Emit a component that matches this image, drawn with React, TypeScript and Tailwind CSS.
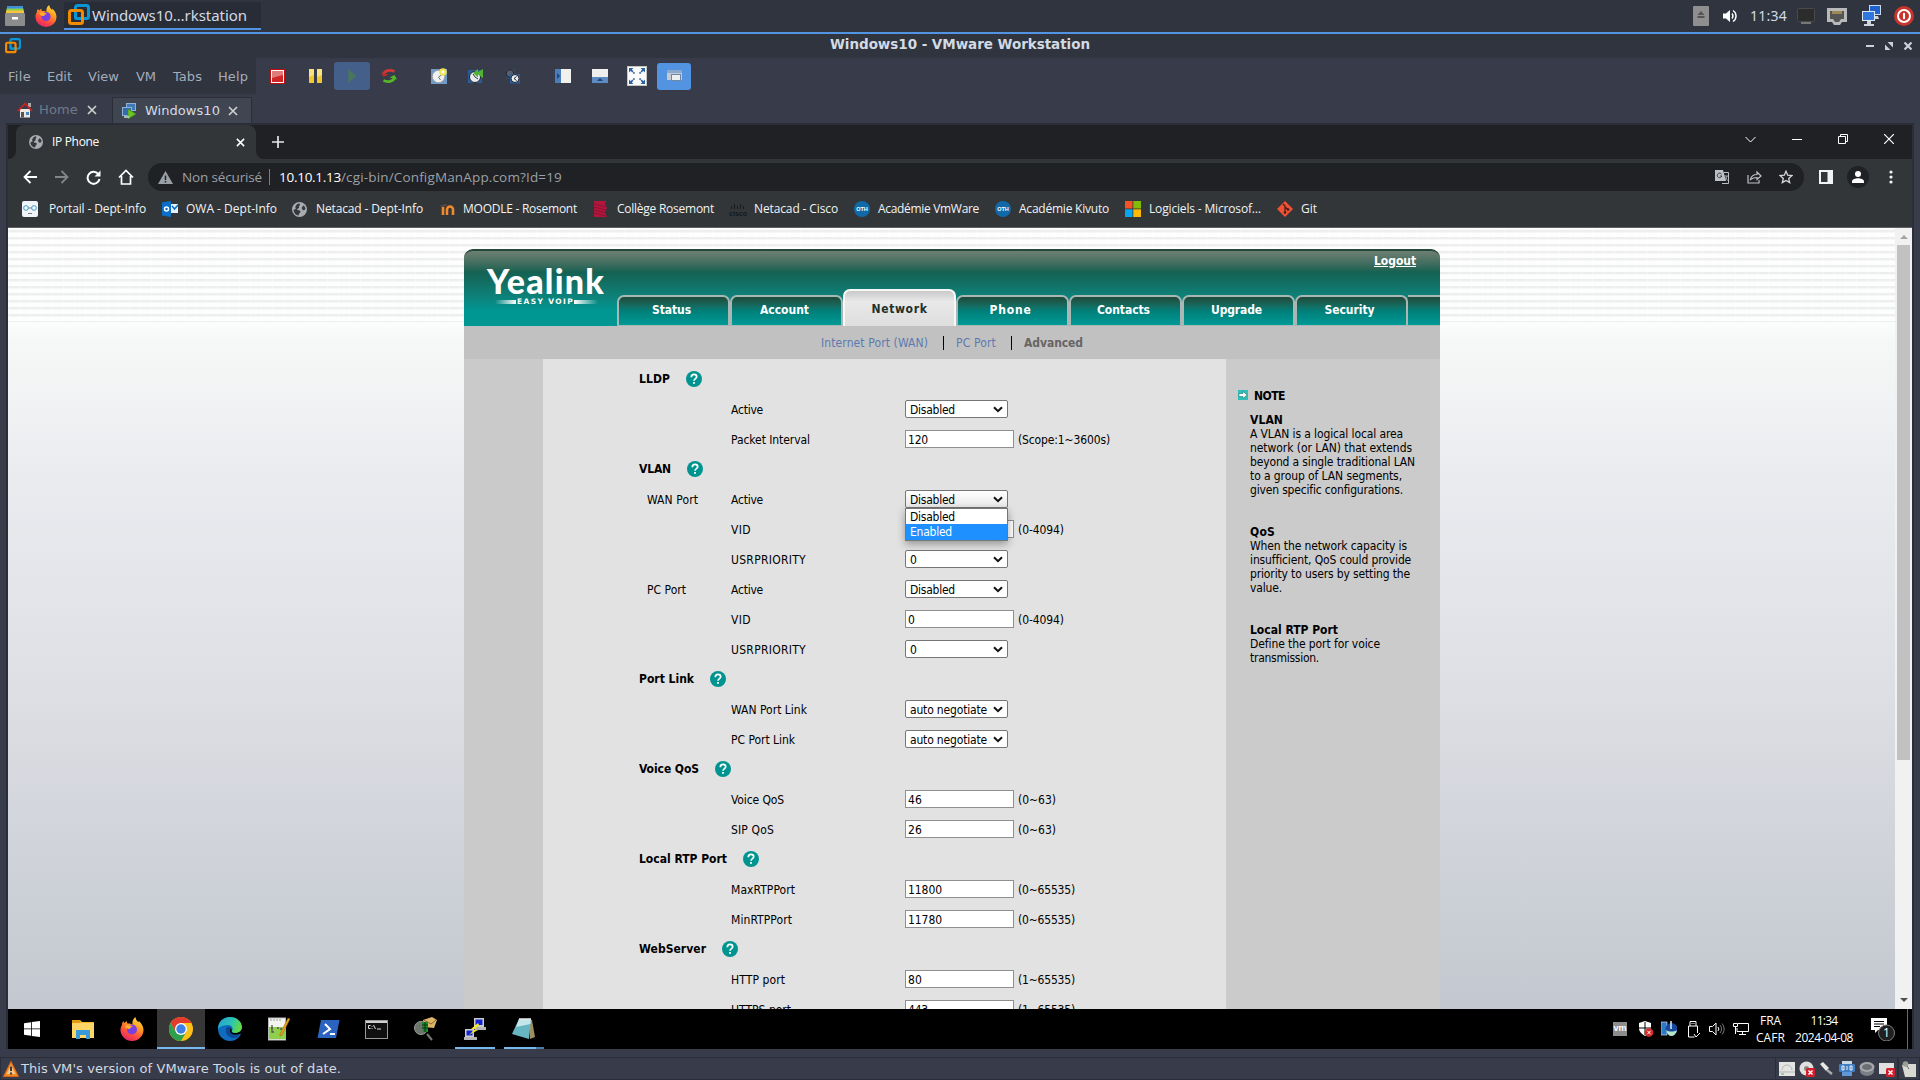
import React, { useLayoutEffect, useRef, useState } from "react";

/** Single-line label whose tracking is adjusted so that it fills a given width. */
function Fit({ w, className = "", children }: { w: number; className?: string; children: string }) {
  const ref = useRef<HTMLSpanElement>(null);
  const [ls, setLs] = useState(0);
  useLayoutEffect(() => {
    if (ref.current) {
      const natural = ref.current.getBoundingClientRect().width;
      setLs((w - natural) / children.length);
    }
  }, [w, children]);
  return (
    <span className={"block shrink-0 whitespace-nowrap " + className} style={{ width: w }}>
      <span ref={ref} style={{ letterSpacing: ls }}>
        {children}
      </span>
    </span>
  );
}

type IconProps = { className?: string };

const VmwareLogo = ({ className = "" }: IconProps) => (
  <svg viewBox="0 0 22 22" className={className} fill="none">
    <rect x="7.500" y="1.500" width="13" height="13" rx="2" stroke="#0a95d4" strokeWidth="3" />
    <rect x="1.500" y="6.500" width="13" height="13" rx="2" stroke="#f38b00" strokeWidth="3" />
    <path d="M7.500 10V13a1.500 1.500 0 0 0 1.500 1.500h4" stroke="#0a95d4" strokeWidth="3" />
  </svg>
);

const Firefox = ({ className = "" }: IconProps) => (
  <svg viewBox="0 0 24 24" className={className}>
    <defs>
      <linearGradient id="ffg" x1="0.8" y1="0" x2="0.3" y2="1">
        <stop offset="0" stopColor="#ffe847" />
        <stop offset="0.35" stopColor="#ffa21f" />
        <stop offset="0.7" stopColor="#ff4f3d" />
        <stop offset="1" stopColor="#e5236b" />
      </linearGradient>
    </defs>
    <path
      d="M2 8c0-2 .8-3.500 1.500-4 0 1 .5 1.800 1 2C5.500 5 6 4.500 7 4c-.2 1.200 0 2 .6 2.600C9 6.500 11 6.500 12.500 7.500 12 4.500 13 1.500 15.500 0c.2 2.500 1.500 4 3.200 5.500 0-.6 0-1.300-.2-1.800C21.500 6 23.500 9.500 23.500 13A11.500 11 0 0 1 .5 13C.5 11 1 9.500 2 8Z"
      fill="url(#ffg)"
    />
    <circle cx="12" cy="12.500" r="5" fill="#7a3fe0" />
    <path d="M5 9c3-2 6-.5 8 .8-2 .3-3 1.200-3 2.200-2 .2-4.500-.5-5-3Z" fill="#ffae2e" />
  </svg>
);

const Globe = ({ className = "" }: IconProps) => (
  <svg viewBox="0 0 16 16" className={className}>
    <circle cx="8" cy="8" r="8" fill="#a9adb2" />
    <path d="M8 1.500C9.500 3 7 4 7.500 5.500S5 7 5.500 8 9 8.500 9 10s-2 2-2 4.300C3.500 14 1.700 11 1.700 8.300L4 7.500 3.500 5 5.500 2.200ZM10.500 5.500c1-.5 1.500-1.500 1.500-2 1.500 1 2.300 2.500 2.400 4L12.500 9 10.500 7.500Z" fill="#35383c" />
  </svg>
);

const Close = ({ className = "" }: IconProps) => (
  <svg viewBox="0 0 10 10" className={className} fill="none" stroke="currentColor">
    <path d="M1 1l8 8M9 1L1 9" strokeWidth="1.700" />
  </svg>
);

const HelpIcon = () => (
  <svg viewBox="0 0 16 16" className="ml-4 h-4 w-4 shrink-0">
    <circle cx="8" cy="8" r="8" fill="#009490" />
    <path d="M5.300 6.200C5.300 4.400 6.500 3.400 8 3.400s2.700 1 2.700 2.400C10.700 7.500 8 7.700 8 9.800" fill="none" stroke="#fff" strokeWidth="1.700" />
    <rect x="7.100" y="11" width="1.800" height="1.800" fill="#fff" />
  </svg>
);

/* ---------- host desktop panel ---------- */

function TopPanel() {
  return (
    <div className="flex h-[34px] shrink-0 items-center border-b-2 border-[#5294e2] bg-[#2f343f]">
      <svg viewBox="0 0 20 20" className="ml-[5px] h-5 w-5">
        <rect x="2" y="0" width="16" height="4" fill="#3f8fd6" />
        <rect x="1.500" y="2.500" width="17" height="3" fill="#8bd04f" />
        <rect x="1" y="4.500" width="18" height="3" fill="#f5c63c" />
        <rect x="0" y="7" width="20" height="13" rx="1" fill="#8c8c8c" />
        <rect x="7" y="11" width="6" height="2.500" fill="#fff" />
      </svg>
      <Firefox className="ml-[10px] h-[22px] w-[22px]" />
      <div className="ml-[7px] flex h-7 w-[197px] items-center border-b-2 border-[#5294e2] bg-[#282c36]">
        <VmwareLogo className="ml-1 h-[22px] w-[22px]" />
        <Fit w={155} className="ml-[2px] font-['Noto_Sans'] text-[15px] text-[#d3dae3]">Windows10…rkstation</Fit>
      </div>
      <div className="ml-auto flex h-full items-center">
        <svg viewBox="0 0 16 20" className="h-5 w-4">
          <rect width="16" height="20" rx="1" fill="#8f8f8f" />
          <path d="M4.500 9L8 5l3.500 4ZM4.500 10h7v2h-7Z" fill="#555" />
        </svg>
        <svg viewBox="0 0 15 14" className="ml-[14px] h-[14px] w-[15px]" fill="none" stroke="#fff" strokeWidth="1.400">
          <path d="M0 4.500h3L7 1v12L3 9.500H0Z" fill="#fff" stroke="none" />
          <path d="M9 4.500a4 4 0 0 1 0 5M10 1.500a6.500 6.500 0 0 1 0 11" />
        </svg>
        <Fit w={37} className="mb-px ml-3 font-['Noto_Sans'] text-[14px] text-[#d3dae3]">11:34</Fit>
        <svg viewBox="0 0 18 16" className="ml-[10px] h-4 w-[18px]">
          <rect x="0.500" y="0.500" width="17" height="13" rx="1" fill="#2c2c2c" stroke="#4a4a4a" />
          <rect x="4" y="14" width="10" height="2" fill="#777" />
        </svg>
        <svg viewBox="0 0 20 17" className="ml-3 h-[17px] w-5">
          <path d="M0 0h20v14h-5l-2 3H7l-2-3H0Z" fill="#b9b9b9" />
          <path d="M3 3h14v8h-3l-2 3H8l-2-3H3Z" fill="#555" />
          <path d="M6 3v3M8 3v3M10 3v3M12 3v3M14 3v3" stroke="#eac054" />
        </svg>
        <svg viewBox="0 0 19 22" className="ml-[15px] h-[22px] w-[19px]">
          <rect x="7.500" y="0.500" width="11" height="9" fill="#1f62c9" stroke="#c9d8ee" />
          <path d="M10 11h6l1 3h-8Z" fill="#cfd4da" />
          <rect x="0.500" y="6.500" width="12" height="9" fill="#2f77dc" stroke="#dce6f5" />
          <path d="M5 16h4v3h3v2H2v-2h3Z" fill="#cfd4da" />
        </svg>
        <svg viewBox="0 0 20 20" className="mr-[6px] ml-[13px] h-5 w-5" fill="none">
          <circle cx="10" cy="10" r="10" fill="#c9342c" />
          <circle cx="10" cy="10" r="6" stroke="#fff" strokeWidth="2" />
          <path d="M10 7v6" stroke="#fff" strokeWidth="2" />
        </svg>
      </div>
    </div>
  );
}

function TitleBar() {
  return (
    <div className="grid h-6 shrink-0 grid-cols-[1fr_260px_1fr] items-center bg-[#2f343f] text-[#d3dae3]">
      <VmwareLogo className="ml-[5px] h-4 w-4" />
      <Fit w={260} className="pb-[3px] font-['DejaVu_Sans'] text-[13.500px] font-bold">Windows10 - VMware Workstation</Fit>
      <div className="flex items-center justify-end pr-2">
        <span className="h-[2px] w-2 bg-[#c9d1dc]" />
        <svg viewBox="0 0 8 8" className="ml-[11px] h-2 w-2" fill="#c9d1dc">
          <path d="M2.500 0H8v5.500ZM0 2.500V8h5.500Z" />
        </svg>
        <svg viewBox="0 0 8 8" className="ml-[11px] h-2 w-2" stroke="#c9d1dc" strokeWidth="2.200">
          <path d="M0.500 0.500l7 7M7.500 0.500l-7 7" />
        </svg>
      </div>
    </div>
  );
}

const menus: [string, number, string][] = [
  ["File", 23, "ml-2"],
  ["Edit", 25, "ml-4"],
  ["View", 31, "ml-4"],
  ["VM", 20, "ml-[17px]"],
  ["Tabs", 29, "ml-[17px]"],
  ["Help", 30, "ml-4"],
];

function MenuBar() {
  return (
    <div className="flex h-9 shrink-0 items-start bg-[#383c4a]">
      <div className="flex h-9 w-64 items-center bg-[#2f343f] pt-[2px] font-['DejaVu_Sans'] text-[13px] text-[#a3acbb]">
        {menus.map(([label, w, ml]) => (
          <Fit key={label} w={w} className={ml}>{label}</Fit>
        ))}
      </div>
      <div className="flex h-9 items-center">
        <svg viewBox="0 0 15 15" className="ml-[14px] h-[15px] w-[15px]">
          <rect width="15" height="15" fill="#c00d0d" />
          <rect x="1.500" y="1.500" width="12" height="12" fill="#cf2525" stroke="#fff" />
          <path d="M2 2h11v4L2 9Z" fill="#df7b7b" />
        </svg>
        <svg viewBox="0 0 13 14" className="ml-6 h-[14px] w-[13px]">
          <path d="M0 0h5v14H0ZM8 0h5v14H8Z" fill="#f0c931" />
          <path d="M0 0h5v6L0 8ZM8 0h5v6L8 8Z" fill="#f8e382" />
        </svg>
        <div className="ml-3 flex h-7 w-9 items-center justify-center rounded-[3px] bg-[#435f8a]">
          <svg viewBox="0 0 9 14" className="h-[14px] w-[9px]">
            <path d="M0.500 0.500L8 7L0.500 13.500Z" fill="#45795a" stroke="#4f6d68" />
          </svg>
        </div>
        <svg viewBox="0 0 16 14" className="ml-[11px] h-[14px] w-4" fill="none" strokeWidth="2.800">
          <path d="M2.500 5C4 1.500 9 .5 13.500 2.500" stroke="#cf3636" />
          <path d="M0 3.500l2.500 4.500 5-2.500Z" fill="#b92a2a" />
          <path d="M13.500 9C12 12.500 7 13.500 2.500 11.500" stroke="#56b528" />
          <path d="M16 10.500L13.500 6l-5 2.500Z" fill="#56b528" />
        </svg>
        <svg viewBox="0 0 16 16" className="ml-[34px] h-4 w-4">
          <rect y="1" width="16" height="15" fill="#6f9bc9" />
          <circle cx="7.500" cy="8.500" r="6.300" fill="#eef0f2" stroke="#999" />
          <path d="M7.500 9l3-2M7.500 9l2 3" stroke="#777" />
          <circle cx="12" cy="4" r="3.800" fill="#f2e253" />
          <circle cx="12" cy="4" r="1.500" fill="#fff" />
        </svg>
        <svg viewBox="0 0 16 16" className="ml-[21px] h-4 w-4">
          <rect y="2" width="14" height="13" fill="#2b5c96" />
          <circle cx="7" cy="9" r="5.500" fill="#e9ecef" stroke="#222" />
          <path d="M7 9l-2-3M7 9l3 2" stroke="#333" />
          <path d="M5 5l5-4v3l5-3v9l-5-3.500v3Z" fill="#4fb434" />
        </svg>
        <svg viewBox="0 0 16 16" className="ml-[21px] h-4 w-4">
          <rect x="1" y="1" width="9" height="10" fill="#39465c" />
          <circle cx="5" cy="5.500" r="3.800" fill="#58606e" stroke="#1f242e" />
          <rect x="5" y="6" width="10" height="9.500" fill="#2f5e98" />
          <circle cx="10" cy="10.500" r="4" fill="#e9ecef" stroke="#1b2433" />
          <path d="M11.500 8.500L9 10.500l2.500 2" stroke="#222" fill="none" />
        </svg>
        <svg viewBox="0 0 16 14" className="ml-[34px] h-[14px] w-4">
          <rect width="16" height="14" fill="#f0f0ee" />
          <rect width="6" height="14" fill="#4a7db9" />
          <path d="M2 4l3 3-3 3Z" fill="#1d4579" />
        </svg>
        <svg viewBox="0 0 16 14" className="ml-[21px] h-[14px] w-4">
          <rect width="16" height="14" fill="#f0f0ee" />
          <rect y="8" width="16" height="6" fill="#5e8cc2" />
          <path d="M5 12l3-3 3 3Z" fill="#1d4579" />
        </svg>
        <svg viewBox="0 0 20 20" className="ml-[19px] h-5 w-5">
          <rect x="0.500" y="0.500" width="19" height="19" fill="#fafafa" stroke="#c5c5c0" />
          <path d="M2 2h4.500L2 6.500ZM18 2v4.500L13.500 2ZM2 18v-4.500L6.500 18ZM18 18h-4.500l4.500-4.500Z" fill="#2c5fa0" />
          <path d="M3 3l4.500 4.500M17 3l-4.500 4.500M3 17l4.500-4.500M17 17l-4.500-4.500" stroke="#2c5fa0" strokeWidth="1.700" strokeDasharray="4 .7 2" />
        </svg>
        <div className="ml-[10px] flex h-[27px] w-[34px] items-center justify-center rounded-[3px] bg-[#5294e2]">
          <svg viewBox="0 0 15 12" className="h-3 w-[15px]">
            <rect width="15" height="10" fill="#c3ccd6" />
            <rect y="0" width="15" height="3" fill="#8aa9cc" />
            <rect x="4.500" y="4.500" width="9" height="6" fill="#eceef0" stroke="#6d87a5" />
          </svg>
        </div>
      </div>
    </div>
  );
}

function VmTabs() {
  return (
    <div className="flex h-[29px] shrink-0 items-end bg-[#383c4a] font-['DejaVu_Sans'] text-[13px]">
      <div className="flex h-[26px] w-28 items-center text-[#70788a]">
        <svg viewBox="0 0 16 16" className="ml-[17px] h-4 w-4">
          <path d="M3 7h10v8.500H3Z" fill="#ece9e4" />
          <path d="M11 1h3v4h-3Z" fill="#aaa" />
          <path d="M1 9l7-7.500L15 9" fill="none" stroke="#cf2222" strokeWidth="1.800" />
          <path d="M4 10h3v5.500H4Z" fill="#555" />
          <path d="M9 10h3v3H9Z" fill="#4d83bd" />
        </svg>
        <Fit w={39} className="ml-[6px]">Home</Fit>
        <Close className="ml-[9px] h-[10px] w-[10px] text-[#cdd0cc]" />
      </div>
      <div className="flex h-[26px] w-[140px] items-center border border-b-0 border-[#2b2e39] bg-[#404552] text-[#d3dae3]">
        <svg viewBox="0 0 15 16" className="ml-[9px] h-4 w-[15px]">
          <rect x="4.500" y="0.500" width="9" height="7" fill="#4179b8" stroke="#8db2da" />
          <rect x="0.500" y="4.500" width="9" height="8" fill="#346cab" stroke="#8db2da" />
          <path d="M6 6l8 5-8 5Z" fill="#6cc427" stroke="#3f8b16" strokeWidth="0.700" />
          <path d="M2 14h5" stroke="#cdd" strokeWidth="1.500" />
        </svg>
        <Fit w={75} className="ml-2">Windows10</Fit>
        <Close className="ml-2 h-[10px] w-[10px] text-[#cdd0cc]" />
      </div>
    </div>
  );
}

/* ---------- guest browser ---------- */

function ChromeTabStrip() {
  return (
    <div className="flex h-[34px] shrink-0 items-stretch bg-[#202124] text-white">
      <div className="flex w-2 items-end bg-[#323639]"><span className="h-full w-full rounded-br-lg bg-[#202124]" /></div>
      <div className="flex w-[240px] items-center rounded-t-lg bg-[#323639]">
        <Globe className="ml-[13px] h-[14px] w-[14px]" />
        <Fit w={47} className="ml-[9px] font-['Open_Sans'] text-[12px]">IP Phone</Fit>
        <Close className="mr-[11px] ml-auto h-[9px] w-[9px]" />
      </div>
      <div className="flex w-2 items-end bg-[#323639]"><span className="h-full w-full rounded-bl-lg bg-[#202124]" /></div>
      <svg viewBox="0 0 12 12" className="ml-2 h-3 w-3 self-center" stroke="#e4e6e8" strokeWidth="1.700">
        <path d="M6 0v12M0 6h12" />
      </svg>
      <div className="mr-[18px] ml-auto flex items-start pt-[9px]">
        <svg viewBox="0 0 11 11" className="mr-9 h-[11px] w-[11px]" fill="none" stroke="#fff">
          <path d="M0.500 3l5 5 5-5" />
        </svg>
        <svg viewBox="0 0 10 10" className="mr-9 h-[10px] w-[10px]" stroke="#fff">
          <path d="M0 5.500h10" />
        </svg>
        <svg viewBox="0 0 10 10" className="mr-9 h-[10px] w-[10px]" fill="none" stroke="#fff">
          <path d="M0.500 2.500h7v7h-7ZM2.500 2.500v-2h7v7h-2" />
        </svg>
        <svg viewBox="0 0 10 10" className="h-[10px] w-[10px]" fill="none" stroke="#fff" strokeWidth="1.200">
          <path d="M0 0l10 10M10 0L0 10" />
        </svg>
      </div>
    </div>
  );
}

function AddressBar() {
  return (
    <div className="flex h-9 shrink-0 items-center bg-[#323639]">
      <svg viewBox="0 0 14 14" className="ml-[15px] h-[14px] w-[14px]" fill="none" stroke="#fff" strokeWidth="1.800">
        <path d="M14 7H1.500M7.500 1L1.500 7l6 6" />
      </svg>
      <svg viewBox="0 0 14 14" className="ml-[18px] h-[14px] w-[14px]" fill="none" stroke="#82868a" strokeWidth="1.800">
        <path d="M0 7h12.500M6.500 1l6 6-6 6" />
      </svg>
      <svg viewBox="0 0 15 15" className="ml-[17px] h-[15px] w-[15px]" fill="none" stroke="#fff" strokeWidth="2">
        <path d="M12.600 4.500A6 6 0 1 0 13.500 9" />
        <path d="M14.500 0.500v6h-6Z" fill="#fff" stroke="none" />
      </svg>
      <svg viewBox="0 0 16 16" className="ml-[17px] h-4 w-4" fill="none" stroke="#fff" strokeWidth="1.700">
        <path d="M1 8.500L8 1.500l7 7M3.500 7v8h9V7" />
      </svg>
      <div className="ml-[14px] flex h-7 w-[1656px] items-center rounded-full bg-[#202124] font-['Open_Sans'] text-[13.500px] text-[#9aa0a6]">
        <svg viewBox="0 0 15 13" className="ml-[10px] h-[13px] w-[15px]">
          <path d="M7.500 0L15 13H0Z" fill="#9aa0a6" />
          <path d="M7.500 4.500v4.500M7.500 10v1.500" stroke="#202124" strokeWidth="1.500" />
        </svg>
        <Fit w={80} className="ml-[9px]">Non sécurisé</Fit>
        <span className="ml-[7px] h-4 w-px bg-[#7a7e82]" />
        <Fit w={62} className="ml-[9px] text-white">10.10.1.13</Fit>
        <Fit w={221}>/cgi-bin/ConfigManApp.com?Id=19</Fit>
        <div className="mr-[11px] ml-auto flex items-center">
          <svg viewBox="0 0 14 14" className="mr-[18px] h-[14px] w-[14px]">
            <path d="M0 0h8l3 11H0Z" fill="#bdc1c6" />
            <path d="M8.500 2.500h5v11H7" fill="none" stroke="#bdc1c6" />
            <path d="M6.500 4.200A2.300 2.300 0 1 0 6.800 6H4.800" fill="none" stroke="#3a3c40" />
            <path d="M9 6h4M12 6c-.5 2-1.500 3-2 4M10.500 7.500l2 3" fill="none" stroke="#bdc1c6" strokeWidth="0.800" />
          </svg>
          <svg viewBox="0 0 15 14" className="mr-[17px] h-[14px] w-[15px]" fill="none" stroke="#bdc1c6" strokeWidth="1.200">
            <path d="M1 5v8h11v-3M3.500 9.500c.5-3 3-5 6.500-5V2l4 4-4 3.500V7.500c-2.500 0-4.500.5-6.500 2Z" />
          </svg>
          <svg viewBox="0 0 14 14" className="h-[14px] w-[14px]" fill="none" stroke="#d5d7da" strokeWidth="1.300">
            <path d="M7 1.300l1.700 3.900 4.200.4-3.200 2.800 1 4.200L7 10.400l-3.700 2.200 1-4.200L1.100 5.600l4.200-.4Z" />
          </svg>
        </div>
      </div>
      <svg viewBox="0 0 14 14" className="ml-[15px] h-[14px] w-[14px]">
        <rect width="14" height="14" fill="#f1f3f4" />
        <rect x="2" y="2" width="6.500" height="10" fill="#323639" />
      </svg>
      <svg viewBox="0 0 22 22" className="ml-[14px] h-[22px] w-[22px]">
        <circle cx="11" cy="11" r="11" fill="#202124" />
        <circle cx="11" cy="8" r="3" fill="#fff" />
        <path d="M5 17v-1.500c0-2 3.500-3.200 6-3.200s6 1.200 6 3.200V17Z" fill="#fff" />
      </svg>
      <svg viewBox="0 0 4 14" className="ml-5 h-[14px] w-1" fill="#f1f3f4">
        <circle cx="2" cy="2" r="1.600" />
        <circle cx="2" cy="7" r="1.600" />
        <circle cx="2" cy="12" r="1.600" />
      </svg>
    </div>
  );
}

const Oth = () => (
  <div className="flex h-4 w-4 items-center justify-center rounded-full bg-[#1169a8] font-['Liberation_Sans'] text-[5.500px] font-bold text-white">OTH</div>
);

const bookmarks: { label: string; w: number; slot: string; icon: React.ReactNode }[] = [
  {
    label: "Portail - Dept-Info", w: 97, slot: "w-[140px] gap-[11px]",
    icon: (
      <svg viewBox="0 0 16 16" className="h-4 w-4">
        <rect width="16" height="16" rx="2" fill="#eef4f8" />
        <circle cx="4" cy="7" r="2.300" fill="#fff" stroke="#3c94c2" />
        <circle cx="12" cy="7" r="2.300" fill="#fff" stroke="#3c94c2" />
        <path d="M6.500 7h3M6 12.500h4" stroke="#557" strokeWidth="0.800" />
      </svg>
    ),
  },
  {
    label: "OWA - Dept-Info", w: 91, slot: "w-[130px] gap-2",
    icon: (
      <svg viewBox="0 0 16 16" className="h-4 w-4">
        <path d="M0 1.500L9 0v16l-9-1.500Z" fill="#0a6fc9" />
        <rect x="9" y="3" width="7" height="9" fill="#e8f1fb" />
        <path d="M10 5l2.500 3L16 4" stroke="#0a6fc9" strokeWidth="1.500" fill="none" />
        <circle cx="4.500" cy="8" r="2" fill="none" stroke="#fff" strokeWidth="1.500" />
      </svg>
    ),
  },
  { label: "Netacad - Dept-Info", w: 107, slot: "w-[147px] gap-2", icon: <Globe className="h-[15px] w-[15px]" /> },
  {
    label: "MOODLE - Rosemont", w: 114, slot: "w-[154px] gap-2",
    icon: (
      <svg viewBox="0 0 16 16" className="h-4 w-4" fill="none">
        <path d="M4 6v8M8 14V8.500a3 3 0 0 1 6 0V14" stroke="#f08a2c" strokeWidth="2.600" />
        <path d="M0 5l6-2 3 1-5 2Z" fill="#5a4a42" />
      </svg>
    ),
  },
  {
    label: "Collège Rosemont", w: 97, slot: "w-[137px] gap-2",
    icon: (
      <svg viewBox="0 0 16 16" className="h-4 w-4">
        <path d="M1 0h12l-1 3 2 4-2 4 2 5H1Z" fill="#b3163c" />
        <path d="M1 3l12 3M1 6l12 3M1 9l12 3M1 12l12 3" stroke="#7e1331" strokeWidth="0.800" />
      </svg>
    ),
  },
  {
    label: "Netacad - Cisco", w: 84, slot: "w-[124px] gap-2",
    icon: (
      <div className="flex h-4 w-4 flex-col items-center justify-center">
        <svg viewBox="0 0 16 8" className="h-2 w-4" stroke="#17191b">
          <path d="M1.500 4v3M4.500 2v5M7.500 4v3M10.500 2v5M13.500 4v3" />
        </svg>
        <span className="font-['Liberation_Sans'] text-[7px] leading-[7px] font-bold text-[#17191b]">cisco</span>
      </div>
    ),
  },
  { label: "Académie VmWare", w: 101, slot: "w-[141px] gap-2", icon: <Oth /> },
  { label: "Académie Kivuto", w: 90, slot: "w-[130px] gap-2", icon: <Oth /> },
  {
    label: "Logiciels - Microsof…", w: 112, slot: "w-[152px] gap-2",
    icon: (
      <svg viewBox="0 0 16 16" className="h-4 w-4">
        <path d="M0 0h7.500v7.500H0Z" fill="#f35325" />
        <path d="M8.300 0H16v7.500H8.300Z" fill="#81bc06" />
        <path d="M0 8.300h7.500V16H0Z" fill="#05a6f0" />
        <path d="M8.300 8.300H16V16H8.300Z" fill="#ffba08" />
      </svg>
    ),
  },
  {
    label: "Git", w: 16, slot: "w-[60px] gap-2",
    icon: (
      <svg viewBox="0 0 16 16" className="h-4 w-4">
        <path d="M8 0l8 8-8 8-8-8Z" fill="#f05033" />
        <path d="M6 3l2 2v7M8 6l3 2.500" stroke="#3a1f1b" strokeWidth="1.200" fill="none" />
        <circle cx="8" cy="11.500" r="1.300" fill="#3a1f1b" />
        <circle cx="11" cy="8.500" r="1.300" fill="#3a1f1b" />
      </svg>
    ),
  },
];

function BookmarksBar() {
  return (
    <div className="flex h-[33px] shrink-0 items-center border-b border-[#5f6164] bg-[#323639] pb-1 pl-[14px] font-['Open_Sans'] text-[12px] text-[#f1f3f4]">
      {bookmarks.map((b) => (
        <div key={b.label} className={"flex shrink-0 items-center " + b.slot}>
          <div className="flex w-4 shrink-0 items-center">{b.icon}</div>
          <Fit w={b.w}>{b.label}</Fit>
        </div>
      ))}
    </div>
  );
}

/* ---------- Yealink page ---------- */

const tabs: [string, number][] = [
  ["Status", 39],
  ["Account", 49],
  ["Network", 56],
  ["Phone", 42],
  ["Contacts", 53],
  ["Upgrade", 51],
  ["Security", 50],
];

function Header() {
  return (
    <div className="flex h-[77px] items-stretch rounded-t-[9px] border-t-2 border-[#26483a] bg-linear-to-b from-[#6e7f73] via-[#146152] via-28% to-[#009692] to-80% text-white">
      <div className="flex w-[153px] shrink-0 flex-col pl-[23px]">
        <Fit w={118} className="mt-[13px] font-['Lato'] text-[34px] leading-[34px] font-black">Yealink</Fit>
        <div className="ml-2 flex h-2 items-center">
          <span className="h-1 w-[21px] bg-linear-to-r from-transparent to-white" />
          <Fit w={57} className="ml-px font-['DejaVu_Sans'] text-[7.500px] leading-[8px] font-bold">EASY VOIP</Fit>
          <span className="h-1 w-6 bg-linear-to-l from-transparent to-white" />
        </div>
      </div>
      <div className="flex min-w-0 flex-1 flex-col">
        <Fit w={42} className="mt-[2px] mr-6 self-end font-['DejaVu_Sans_Condensed'] text-[12px] leading-4 font-bold underline">Logout</Fit>
        <div className="mt-auto flex items-end font-['DejaVu_Sans_Condensed'] text-[12px] font-bold">
          {tabs.map(([label, w]) =>
            label === "Network" ? (
              <div key={label} className="flex h-[37px] w-[113px] items-center justify-center rounded-t-[7px] border-2 border-b-0 border-[#f8f8f8] bg-linear-to-b from-[#c9c9c9] via-[#e9e9e9] via-30% to-[#dedede] text-[#22302a]">
                <Fit w={w}>{label}</Fit>
              </div>
            ) : (
              <div key={label} className="flex h-[31px] w-[113px] items-center justify-center rounded-t-[7px] border-2 border-b border-[#a9b8b5] bg-linear-to-b from-[#1d4a39] via-[#007f79] via-50% to-[#009a96] pr-1 pb-[3px]">
                <Fit w={w}>{label}</Fit>
              </div>
            ),
          )}
          <div className="h-[31px] flex-1 border-t-2 border-b border-[#a9b8b5] bg-linear-to-b from-[#1d4a39] via-[#007f79] via-50% to-[#009a96]" />
        </div>
      </div>
    </div>
  );
}

function SubNav() {
  return (
    <div className="flex h-[33px] items-center bg-[#c1c1c1] pl-[357px] font-['DejaVu_Sans_Condensed'] text-[12px] text-[#5d7ab0]">
      <Fit w={107}>Internet Port (WAN)</Fit>
      <span className="ml-[15px] h-[14px] w-px bg-black" />
      <Fit w={40} className="ml-3">PC Port</Fit>
      <span className="ml-[15px] h-[14px] w-px bg-black" />
      <Fit w={59} className="ml-3 font-bold text-[#666]">Advanced</Fit>
    </div>
  );
}

function SelectBox({ value, w, open = false }: { value: string; w: number; open?: boolean }) {
  return (
    <div className={"relative flex h-[18px] w-[103px] items-center justify-between rounded-[2px] border border-[#767676] pl-1 " + (open ? "bg-linear-to-b from-white to-[#e9e9e9]" : "bg-white")}>
      <Fit w={w} className="pt-px">{value}</Fit>
      <svg viewBox="0 0 10 7" className="mr-1 h-[7px] w-[10px]" fill="none" stroke="#111" strokeWidth="2">
        <path d="M1 1.200l4 4 4-4" />
      </svg>
      {open && (
        <div className="absolute top-[17px] -left-px z-10 w-[103px] border border-[#767676] bg-white shadow-[0_3px_8px_rgba(0,0,0,0.35)]">
          <div className="h-[15px] pl-1 leading-4"><Fit w={45}>Disabled</Fit></div>
          <div className="h-4 bg-[#1e90ff] pl-1 leading-4 text-white"><Fit w={42}>Enabled</Fit></div>
        </div>
      )}
    </div>
  );
}

type Row =
  | { kind: "section"; label: string; w: number }
  | { kind: "select"; group?: string; groupW?: number; label: string; w: number; value: string; vw: number; open?: boolean }
  | { kind: "input"; label: string; w: number; value: string; vw: number; hint: string; hw: number };

const rows: Row[] = [
  { kind: "section", label: "LLDP", w: 31 },
  { kind: "select", label: "Active", w: 32, value: "Disabled", vw: 45 },
  { kind: "input", label: "Packet Interval", w: 79, value: "120", vw: 20, hint: "(Scope:1~3600s)", hw: 92 },
  { kind: "section", label: "VLAN", w: 32 },
  { kind: "select", group: "WAN Port", groupW: 51, label: "Active", w: 32, value: "Disabled", vw: 45, open: true },
  { kind: "input", label: "VID", w: 20, value: "", vw: 0, hint: "(0-4094)", hw: 46 },
  { kind: "select", label: "USRPRIORITY", w: 75, value: "0", vw: 7 },
  { kind: "select", group: "PC Port", groupW: 39, label: "Active", w: 32, value: "Disabled", vw: 45 },
  { kind: "input", label: "VID", w: 20, value: "0", vw: 7, hint: "(0-4094)", hw: 46 },
  { kind: "select", label: "USRPRIORITY", w: 75, value: "0", vw: 7 },
  { kind: "section", label: "Port Link", w: 55 },
  { kind: "select", label: "WAN Port Link", w: 76, value: "auto negotiate", vw: 77 },
  { kind: "select", label: "PC Port Link", w: 64, value: "auto negotiate", vw: 77 },
  { kind: "section", label: "Voice QoS", w: 60 },
  { kind: "input", label: "Voice QoS", w: 53, value: "46", vw: 14, hint: "(0~63)", hw: 38 },
  { kind: "input", label: "SIP QoS", w: 43, value: "26", vw: 14, hint: "(0~63)", hw: 38 },
  { kind: "section", label: "Local RTP Port", w: 88 },
  { kind: "input", label: "MaxRTPPort", w: 64, value: "11800", vw: 34, hint: "(0~65535)", hw: 57 },
  { kind: "input", label: "MinRTPPort", w: 61, value: "11780", vw: 34, hint: "(0~65535)", hw: 57 },
  { kind: "section", label: "WebServer", w: 67 },
  { kind: "input", label: "HTTP port", w: 54, value: "80", vw: 14, hint: "(1~65535)", hw: 57 },
  { kind: "input", label: "HTTPS port", w: 60, value: "443", vw: 20, hint: "(1~65535)", hw: 57 },
];

function FormRow({ row }: { row: Row }) {
  if (row.kind === "section") {
    return (
      <div className="flex h-[30px] items-center pl-24">
        <Fit w={row.w} className="font-bold">{row.label}</Fit>
        <HelpIcon />
      </div>
    );
  }
  return (
    <div className="flex h-[30px] items-center">
      <div className="w-[188px] shrink-0 pt-px pl-[104px]">
        {row.kind === "select" && row.group && <Fit w={row.groupW ?? 40}>{row.group}</Fit>}
      </div>
      <div className="w-[174px] shrink-0 pt-px"><Fit w={row.w}>{row.label}</Fit></div>
      {row.kind === "select" ? (
        <SelectBox value={row.value} w={row.vw} open={row.open} />
      ) : (
        <>
          <div className="flex h-[18px] w-[109px] items-center border border-[#8f8f8f] bg-white pl-[2px]">
            {row.value && <Fit w={row.vw} className="pt-px">{row.value}</Fit>}
          </div>
          <Fit w={row.hw} className="ml-1 pt-px">{row.hint}</Fit>
        </>
      )}
    </div>
  );
}

const notes: { title: string; tw: number; lines: [string, number][] }[] = [
  {
    title: "VLAN", tw: 33,
    lines: [
      ["A VLAN is a logical local area", 153],
      ["network (or LAN) that extends", 162],
      ["beyond a single traditional LAN", 165],
      ["to a group of LAN segments,", 152],
      ["given specific configurations.", 153],
    ],
  },
  {
    title: "QoS", tw: 25,
    lines: [
      ["When the network capacity is", 157],
      ["insufficient, QoS could provide", 161],
      ["priority to users by setting the", 160],
      ["value.", 32],
    ],
  },
  {
    title: "Local RTP Port", tw: 88,
    lines: [
      ["Define the port for voice", 130],
      ["transmission.", 69],
    ],
  },
];

function NotesPanel() {
  return (
    <div className="w-[214px] shrink-0 bg-[#cbcbcb] pl-3 leading-[14px]">
      <div className="mt-[30px] flex items-center">
        <svg viewBox="0 0 10 10" className="mb-[2px] h-[10px] w-[10px]">
          <rect width="10" height="10" fill="#2fbdb8" />
          <path d="M1 3.500h4V1.500L9 5 5 8.500V6.500H1Z" fill="#fff" stroke="#25605f" strokeWidth="0.500" />
        </svg>
        <Fit w={31} className="ml-[6px] font-bold">NOTE</Fit>
      </div>
      <div className="mt-[10px] flex flex-col gap-7 pl-3">
        {notes.map((n) => (
          <div key={n.title}>
            <Fit w={n.tw} className="font-bold">{n.title}</Fit>
            {n.lines.map(([t, w]) => (
              <Fit key={t} w={w}>{t}</Fit>
            ))}
          </div>
        ))}
      </div>
    </div>
  );
}

function YealinkPage() {
  return (
    <div className="flex min-h-0 flex-1 bg-[linear-gradient(to_bottom,#fefefe_0px,#fcfdfd_92px,#f6f8f7_112px,#eaebef_250px,#dfe0e5_450px,#d0d3da_620px,#c3c7cf_780px)]">
      <div className="flex min-w-0 flex-1 justify-center overflow-hidden bg-[repeating-linear-gradient(to_right,rgba(255,255,255,0.350)_0px,rgba(255,255,255,0.350)_1px,transparent_1px,transparent_11px),repeating-linear-gradient(to_bottom,transparent_0px,transparent_2px,#ebecec_2px,#f0f0f0_4px,transparent_5px,transparent_7px)] bg-[size:100%_94px] bg-no-repeat pt-[21px]">
        <div className="ml-px flex h-[900px] w-[976px] shrink-0 flex-col font-['DejaVu_Sans_Condensed'] text-[12px] text-black">
          <Header />
          <SubNav />
          <div className="flex flex-1 items-stretch">
            <div className="w-[79px] shrink-0 bg-[#cacaca]" />
            <div className="min-w-0 flex-1 bg-[#e2e2e2] pt-[5px]">
              {rows.map((row, i) => (
                <FormRow key={i} row={row} />
              ))}
            </div>
            <NotesPanel />
          </div>
        </div>
      </div>
      <div className="flex w-[17px] shrink-0 flex-col items-center bg-[#f1f1f1] pt-[7px] pb-[7px]">
        <svg viewBox="0 0 8 4" className="h-1 w-2" fill="#a3a3a3"><path d="M4 0l4 4H0Z" /></svg>
        <div className="mt-[6px] h-[515px] w-[13px] bg-[#c1c1c1]" />
        <svg viewBox="0 0 8 4" className="mt-auto h-1 w-2" fill="#505050"><path d="M0 0h8L4 4Z" /></svg>
      </div>
    </div>
  );
}

/* ---------- guest taskbar ---------- */

function Taskbar() {
  return (
    <div className="flex h-10 shrink-0 items-stretch bg-black">
      <div className="flex w-12 items-center justify-center">
        <svg viewBox="0 0 16 16" className="h-4 w-4" fill="#fff">
          <path d="M0 2.200L7 1.200v6.300H0ZM7.800 1.100L16 0v7.500H7.800ZM0 8.300h7v6.400L0 13.700ZM7.800 8.300H16V16L7.800 14.900Z" />
        </svg>
      </div>
      <div className="flex w-[52px] items-center justify-center pl-px">
        <svg viewBox="0 0 22 20" className="h-5 w-[22px]">
          <path d="M0 1h8l2 2h12v16H0Z" fill="#f7b62a" />
          <path d="M0 4h22v15H0Z" fill="#ffd666" />
          <path d="M0 1h8v3H0Z" fill="#e69a12" />
          <path d="M4 11h14v9h-4v-4H8v4H4Z" fill="#3a9ad9" />
        </svg>
      </div>
      <div className="flex w-[49px] items-center justify-center pr-px">
        <Firefox className="h-6 w-6" />
      </div>
      <div className="flex w-12 items-center justify-center border-b-2 border-[#76b9ed] bg-[#373737] pt-[2px]">
        <svg viewBox="0 0 24 24" className="h-6 w-6">
          <circle cx="12" cy="12" r="12" fill="#fbc116" />
          <path d="M12 6H22.400A12 12 0 0 0 1.600 6L6.800 15Z" fill="#e33b2e" />
          <path d="M1.600 6A12 12 0 0 0 12 24l5.200-9L12 17.500 6.800 15Z" fill="#2da04c" />
          <circle cx="12" cy="12" r="6" fill="#fff" />
          <circle cx="12" cy="12" r="4.700" fill="#3f7fe8" />
        </svg>
      </div>
      <div className="flex w-12 items-center justify-center pl-[2px]">
        <svg viewBox="0 0 24 24" className="h-6 w-6">
          <defs>
            <linearGradient id="edgeTop" x1="0" y1="0" x2="1" y2="0.300">
              <stop offset="0" stopColor="#249fd6" />
              <stop offset="0.600" stopColor="#2cc3b5" />
              <stop offset="1" stopColor="#5fd84a" />
            </linearGradient>
          </defs>
          <circle cx="12" cy="12" r="12" fill="#0f6cbf" />
          <path d="M0 12C0 4 6 0 12 0c7 0 12 5 12 10 0 4-3 6-6 6-3 0-4.500-1-4-2 2-3-.5-6-4-6C6 8 2 9 0 12Z" fill="url(#edgeTop)" />
          <path d="M9 10c-3 5 0 10 6 11 3 .3 5-1 7-3-3 1-12 0-9-7-1-1.500-3-1.500-4-1Z" fill="#0b4a94" />
          <path d="M12.500 11c2 1 .5 3 1.500 4.200 2 1.500 6 1.200 8.500-1.200L24 12v5h-2c-5 2-10 0-10-3Z" fill="#000" />
        </svg>
      </div>
      <div className="flex w-12 items-center justify-center pl-1">
        <svg viewBox="0 0 22 24" className="h-6 w-[22px]">
          <rect x="0.500" y="1" width="17" height="22" fill="#f3f6ee" stroke="#bbb" />
          <path d="M1 10h17v12H1Z" fill="#8ed04a" />
          <path d="M3 2v2M6 2v2M9 2v2M12 2v2" stroke="#999" />
          <path d="M4 8v7h2M9 11h2M12 12h2M3 11h2" stroke="#555" strokeWidth="1.300" fill="none" />
          <path d="M20 1l2 1-8 16-2 1v-2Z" fill="#e8a41c" stroke="#8a5a12" strokeWidth="0.500" />
        </svg>
      </div>
      <div className="flex w-[50px] items-center justify-center pl-1">
        <svg viewBox="0 0 23 18" className="h-[18px] w-[23px]">
          <path d="M4 0h18.500L19 18H0.500Z" fill="#2b64c0" />
          <path d="M8 4l5 5-7 5M13 14h5" fill="none" stroke="#fff" strokeWidth="2" />
        </svg>
      </div>
      <div className="flex w-12 items-center justify-center pl-[2px]">
        <svg viewBox="0 0 23 19" className="h-[19px] w-[23px]">
          <rect x="0.500" y="0.500" width="22" height="18" fill="#101010" stroke="#999" />
          <path d="M1 2h21" stroke="#d0d0d0" strokeWidth="2" />
          <path d="M5.500 5.500h-2v3h2M7 6v.8M7 8v.8M8.500 5l2 4M12 9h4" fill="none" stroke="#ddd" strokeWidth="1" />
        </svg>
      </div>
      <div className="flex w-12 items-center justify-center pl-1">
        <svg viewBox="0 0 23 24" className="h-6 w-[23px]">
          <path d="M9 3l9-3 5 3-3 8-10-1Z" fill="#dcb568" />
          <path d="M10 3l7 4 5-4" stroke="#8b682b" fill="none" />
          <circle cx="7" cy="11" r="6.500" fill="#6b756b" stroke="#9a9f9a" />
          <path d="M8 5h6v10H9Z" fill="#1a8d2d" />
          <path d="M8 8h6M8 11h6M11 5v10" stroke="#0c3313" />
          <path d="M13 17l5 6" stroke="#777" strokeWidth="2" />
        </svg>
      </div>
      <div className="ml-2 flex w-10 items-center justify-center border-b-2 border-[#76b9ed] pt-[2px]">
        <svg viewBox="0 0 22 24" className="h-6 w-[22px]">
          <path d="M10 1h10v9H10ZM1 12h9v8H1Z" fill="#ccc" />
          <path d="M11.500 2.500h7v5.500h-7ZM2.500 13.500h6v5h-6Z" fill="#1424d2" />
          <path d="M9 10h13v3H11ZM0 20h13v3H0Z" fill="#b5b5b5" />
          <path d="M14 6l-7 6h4l-6 6 9-5h-4l5-5Z" fill="#f3ea20" />
        </svg>
      </div>
      <div className="ml-[9px] flex w-8 items-center justify-center border-b-2 border-[#76b9ed] pt-[2px] pl-[6px]">
        <svg viewBox="0 0 23 22" className="h-[22px] w-[23px]">
          <path d="M17 1l3 1 3 17-5 2Z" fill="#a08d62" />
          <path d="M7 1h12l-2 20L0 16Z" fill="#68b5c2" />
          <path d="M7 1h12l-.5 5L4 9Z" fill="#c4e6ea" />
          <path d="M7 1h12" stroke="#e8e8e8" strokeWidth="1.500" />
        </svg>
      </div>
      <div className="w-2 border-b-2 border-[#4a7da5]" />
      <div className="ml-auto flex items-center font-['Open_Sans'] text-[12px] text-white">
        <div className="flex h-[14px] w-[14px] items-center justify-center bg-[#8d8d8d] font-['Liberation_Sans'] text-[9px] font-bold">vm</div>
        <svg viewBox="0 0 16 16" className="ml-[11px] h-4 w-4">
          <path d="M7 0l6 2v5c0 4-3 6-6 8-3-2-6-4-6-8V2Z" fill="#fff" />
          <path d="M7 1v13M1 7h12" stroke="#000" />
          <circle cx="11" cy="11.500" r="4.300" fill="#d72b2b" />
          <path d="M9.300 9.800l3.400 3.400M12.700 9.800l-3.400 3.400" stroke="#fff" />
        </svg>
        <svg viewBox="0 0 16 16" className="ml-[7px] h-4 w-4">
          <rect x="0" y="1" width="6" height="13" fill="#2d78c8" stroke="#c9d5e4" strokeWidth="0.700" />
          <circle cx="10.500" cy="8" r="6" fill="#17489b" />
          <path d="M10 0v8" stroke="#dcefff" strokeWidth="1.500" />
          <path d="M5 9c3 2 8 2 11 0-1 4-3 6-5.500 6S6 13 5 9Z" fill="#b7e6cb" />
        </svg>
        <svg viewBox="0 0 13 17" className="ml-[10px] h-[17px] w-[13px]" fill="none" stroke="#fff">
          <path d="M3 5V.5h6V5M1.500 5h9v7M1.500 5v11h6M5 2v1M7 2v1M7 13l2 3 4-4" />
        </svg>
        <svg viewBox="0 0 16 14" className="ml-[9px] h-[14px] w-4" fill="none" stroke="#fff">
          <path d="M0.500 4.500h3L7 1v12L3.500 9.500h-3Z" />
          <path d="M9 5a3 3 0 0 1 0 4" />
          <path d="M11 3a6 6 0 0 1 0 8M13 1.500a8 8 0 0 1 0 11" stroke="#777" />
        </svg>
        <svg viewBox="0 0 16 14" className="ml-2 h-[14px] w-4" fill="none" stroke="#fff">
          <path d="M5 1.500h10.500v8H4V6M9.500 9.500v3M6 12.500h7M0.500 1.500h4v3h-4ZM2.500 5v7" />
        </svg>
        <div className="ml-[7px] flex w-[29px] flex-col items-center leading-[17px]">
          <Fit w={21}>FRA</Fit>
          <Fit w={29}>CAFR</Fit>
        </div>
        <div className="ml-[10px] flex w-[58px] flex-col items-center leading-[17px]">
          <Fit w={27}>11:34</Fit>
          <Fit w={58}>2024-04-08</Fit>
        </div>
        <div className="relative ml-[18px] h-6 w-6">
          <svg viewBox="0 0 24 24" className="h-6 w-6">
            <path d="M0 1h16v12H7l-3 3v-3H0Z" fill="#fff" />
            <path d="M3 4.500h10M3 7h10M3 9.500h6" stroke="#000" />
            <circle cx="15.500" cy="16" r="8" fill="#202020" stroke="#7d7d7d" />
          </svg>
          <span className="absolute top-[8px] left-[12px] text-[12px] leading-4">1</span>
        </div>
        <span className="mr-1 ml-3 h-10 w-px bg-[#6a6a6a]" />
      </div>
    </div>
  );
}

function StatusBar() {
  const err = (
    <>
      <rect x="7" y="7" width="9" height="9" rx="1.500" fill="#cf1f2b" />
      <path d="M9.500 9.500l4 4M13.500 9.500l-4 4" stroke="#fff" strokeWidth="1.500" />
    </>
  );
  return (
    <div className="flex h-[23px] shrink-0 items-center border border-[#2b2e39] bg-[#383c4a] pl-[2px]">
      <svg viewBox="0 0 16 16" className="h-4 w-4">
        <path d="M8 0.500L15.500 15.500H0.500Z" fill="#f28a24" stroke="#d8641a" />
        <path d="M8 4l4.500 9h-9Z" fill="#f6c58d" />
        <path d="M8 5.500v4.500M8 11.500v2" stroke="#2d2d2d" strokeWidth="1.800" />
      </svg>
      <Fit w={320} className="ml-[2px] font-['DejaVu_Sans'] text-[13px] text-[#d3dae3]">This VM's version of VMware Tools is out of date.</Fit>
      <div className="ml-auto flex h-full items-center border-l border-[#2b2e39] pr-[2px] pl-[3px]">
        <svg viewBox="0 0 16 14" className="h-[14px] w-4"><rect width="16" height="14" fill="#e3e3e1" /><path d="M0 10h16M3 8a5 5 0 0 1 10 0" stroke="#b5b5b2" fill="none" /><path d="M2 12h3" stroke="#6a6" /></svg>
        <svg viewBox="0 0 16 16" className="ml-1 h-4 w-4"><circle cx="7.500" cy="7.500" r="7" fill="#e0e0de" /><circle cx="7.500" cy="7.500" r="2.500" fill="#888" />{err}</svg>
        <svg viewBox="0 0 16 16" className="ml-1 h-4 w-4"><path d="M1 3l3-2 6 6-3 3Z" fill="#e6e6e4" /><path d="M8 9l5 4" stroke="#aaa" strokeWidth="2.500" /></svg>
        <svg viewBox="0 0 16 16" className="ml-1 h-4 w-4"><path d="M3 0h10v4H3Z" fill="#c9d6e6" /><rect y="3" width="16" height="8" rx="1" fill="#3f7cc0" /><path d="M3 11h10v4H3Z" fill="#5f98d6" /><path d="M3 5h2v4H3ZM8 5v4M11 5h2v4h-2Z" fill="none" stroke="#fff" strokeWidth="0.900" /></svg>
        <svg viewBox="0 0 16 16" className="ml-1 h-4 w-4"><ellipse cx="8" cy="10" rx="7" ry="5" fill="#7b7e84" /><ellipse cx="8" cy="6" rx="7.500" ry="5" fill="#a5a7ab" /><ellipse cx="8" cy="6" rx="5" ry="3" fill="#6a6d72" /></svg>
        <svg viewBox="0 0 16 16" className="ml-1 h-4 w-4"><rect y="2" width="15" height="11" fill="#e0e0de" />{err}</svg>
      </div>
      <div className="flex h-full items-center border-l-2 border-[#2b2e39] pr-[3px] pl-[3px]">
        <svg viewBox="0 0 14 16" className="h-4 w-[14px]"><path d="M0 4l6-1h8v13H3Z" fill="#d9d9d3" /><circle cx="3.500" cy="3" r="2.800" fill="#9a9c96" /><path d="M5 5l2 3" stroke="#666" /></svg>
      </div>
    </div>
  );
}

export default function App() {
  return (
    <div className="flex h-[1080px] w-[1920px] flex-col overflow-hidden bg-[#383c4a]">
      <TopPanel />
      <TitleBar />
      <MenuBar />
      <VmTabs />
      <div className="mr-[6px] ml-[6px] flex h-[926px] shrink-0 flex-col border-t-2 border-r-2 border-l-2 border-[#2b2e39]">
        <ChromeTabStrip />
        <AddressBar />
        <BookmarksBar />
        <YealinkPage />
        <Taskbar />
      </div>
      <div className="min-h-0 flex-1" />
      <StatusBar />
    </div>
  );
}
